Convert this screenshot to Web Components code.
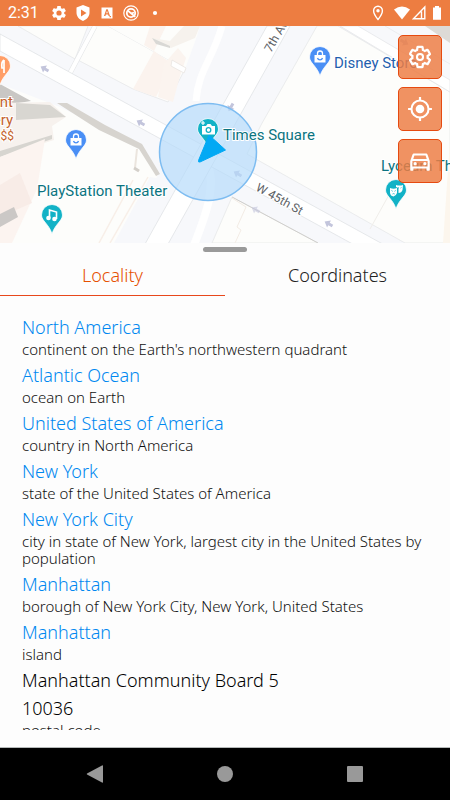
<!DOCTYPE html>
<html lang="en">
<head>
<meta charset="utf-8">
<meta name="viewport" content="width=device-width, initial-scale=1">
<title>Locality</title>
<style>
  body {
    margin: 0;
    font-family: "Noto Sans", "Open Sans", sans-serif;
    font-weight: 300;
    background: #fdfdfd;
  }
</style>
</head>
<body>
<phone-screen>
  <status-bar slot="status">2:31</status-bar>
  <map-view slot="map">
    <map-button icon="settings" label="Settings"></map-button>
    <map-button icon="target" label="My location"></map-button>
    <map-button icon="car" label="Driving mode"></map-button>
  </map-view>
  <bottom-sheet slot="sheet">
    <sheet-tab slot="tabs" selected>Locality</sheet-tab>
    <sheet-tab slot="tabs">Coordinates</sheet-tab>
    <place-item href="#north-america">North America<span slot="about">continent on the Earth's northwestern quadrant</span></place-item>
    <place-item href="#atlantic-ocean">Atlantic Ocean<span slot="about">ocean on Earth</span></place-item>
    <place-item href="#united-states">United States of America<span slot="about">country in North America</span></place-item>
    <place-item href="#new-york">New York<span slot="about">state of the United States of America</span></place-item>
    <place-item href="#new-york-city">New York City<span slot="about">city in state of New York, largest city in the United States by population</span></place-item>
    <place-item href="#manhattan">Manhattan<span slot="about">borough of New York City, New York, United States</span></place-item>
    <place-item href="#manhattan-island">Manhattan<span slot="about">island</span></place-item>
    <place-item>Manhattan Community Board 5</place-item>
    <place-item>10036<span slot="about">postal code</span></place-item>
  </bottom-sheet>
  <nav-bar slot="nav"></nav-bar>
</phone-screen>

<script>
const GEAR = 'M19.14 12.94c.04-.3.06-.61.06-.94 0-.32-.02-.64-.07-.94l2.03-1.58c.18-.14.23-.41.12-.61l-1.92-3.32c-.12-.22-.37-.29-.59-.22l-2.39.96c-.5-.38-1.03-.7-1.62-.94l-.36-2.54c-.04-.24-.24-.41-.48-.41h-3.84c-.24 0-.43.17-.47.41l-.36 2.54c-.59.24-1.13.57-1.62.94l-2.39-.96c-.22-.08-.47 0-.59.22L2.74 8.87c-.12.21-.08.47.12.61l2.03 1.58c-.05.3-.09.63-.09.94s.02.64.07.94l-2.03 1.58c-.18.14-.23.41-.12.61l1.92 3.32c.12.22.37.29.59.22l2.39-.96c.5.38 1.03.7 1.62.94l.36 2.54c.05.24.24.41.48.41h3.84c.24 0 .44-.17.47-.41l.36-2.54c.59-.24 1.13-.56 1.62-.94l2.39.96c.22.08.47 0 .59-.22l1.92-3.32c.12-.22.07-.47-.12-.61l-2.01-1.58z';

function makeTemplate(html) {
  const template = document.createElement('template');
  template.innerHTML = html;
  return template;
}

class BaseElement extends HTMLElement {
  constructor() {
    super();
    this.attachShadow({ mode: 'open' });
    this.shadowRoot.appendChild(this.constructor.template.content.cloneNode(true));
  }
}

class PhoneScreen extends BaseElement {
  static template = makeTemplate(`
    <style>
      :host {
        display: flex;
        flex-direction: column;
        height: 100vh;
        overflow: hidden;
      }
      ::slotted([slot="sheet"]) {
        flex: 1;
        min-height: 0;
      }
    </style>
    <slot name="status"></slot>
    <slot name="map"></slot>
    <slot name="sheet"></slot>
    <slot name="nav"></slot>
  `);
}

class StatusBar extends BaseElement {
  static template = makeTemplate(`
    <style>
      :host {
        display: flex;
        align-items: center;
        justify-content: space-between;
        height: 26px;
        padding: 0 8px;
        box-sizing: border-box;
        background: #ed7d41;
        color: #fff;
        font: 16px/26px Roboto, sans-serif;
      }
      .group {
        display: flex;
        align-items: center;
        gap: 8px;
      }
      .right {
        gap: 6px;
      }
      .radio {
        display: flex;
        gap: 2px;
      }
      .time {
        margin-right: 4px;
      }
      svg {
        display: block;
        fill: #fff;
      }
    </style>
    <div class="group">
      <span class="time"><slot></slot></span>
      <svg width="16" height="16" viewBox="1 1 22 22"><path fill-rule="evenodd" d="${GEAR}M12 15.6a3.6 3.6 0 1 1 0-7.2 3.6 3.6 0 0 1 0 7.2z"/></svg>
      <svg width="16" height="16" viewBox="0 0 16 16"><path fill-rule="evenodd" d="M8 0l6.500 2.500v5c0 4-2.700 7-6.500 8.500C4.200 14.500 1.500 11.500 1.500 7.500v-5zM6 4.500v7l5.500-3.500z"/></svg>
      <svg width="16" height="16" viewBox="0 0 16 16"><path fill-rule="evenodd" d="M2.500 2.500h11v11h-11zM7.300 4.300L5 11h1.400l.5-1.600h2.200l.5 1.600H11L8.700 4.300zm.7 1.500l.8 2.500H7.200zM10.500 11h1.500v1.200h-1.500z"/></svg>
      <svg width="16" height="16" viewBox="0 0 16 16"><g fill="none" stroke="#fff"><circle cx="8" cy="8" r="7.200" stroke-width="1.200"/><circle cx="8" cy="8" r="4.200" stroke-width="1.800"/><path d="M4.700 5.500l7.600 6.300M8 8.500l3-1" stroke-width="1.700"/></g></svg>
      <svg width="16" height="16" viewBox="0 0 16 16"><circle cx="8" cy="8" r="2.100"/></svg>
    </div>
    <div class="group right">
      <svg width="20" height="16" viewBox="-4 0 20 16"><path d="M6 1.200a4.400 4.400 0 0 0-4.400 4.500C1.600 9 6 14.500 6 14.500s4.400-5.500 4.400-8.800A4.400 4.400 0 0 0 6 1.200z" fill="none" stroke="#fff" stroke-width="1.400"/><circle cx="6" cy="5.800" r="1.700"/></svg>
      <div class="radio">
        <svg width="16" height="16" viewBox="0 0 16 16"><path d="M0 4.500Q8-1.500 16 4.500L8 14.500z"/></svg>
        <svg width="14" height="16" viewBox="0 0 14 16"><path d="M12.800 2v11.800H1.500zM9.500 6.500v7" fill="none" stroke="#fff" stroke-width="1.400"/></svg>
      </div>
      <svg width="10" height="16" viewBox="0 0 10 16"><path d="M1 2.500h2V1h4v1.500h2v12.300H1z"/></svg>
    </div>
  `);
}

class MapButton extends BaseElement {
  static icons = {
    settings: `<path transform="translate(12 12) scale(.98) translate(-12 -12)" d="${GEAR}" fill="none" stroke="#fff" stroke-width="2.100"/><circle cx="12" cy="12" r="2.800" fill="none" stroke="#fff" stroke-width="1.900"/>`,
    target: '<circle cx="12" cy="12" r="7.900" fill="none" stroke="#fff" stroke-width="1.900"/><circle cx="12" cy="12" r="4" /><path d="M12 1v3M12 20v3M1 12h3M20 12h3" stroke="#fff" stroke-width="2"/>',
    car: '<path fill-rule="evenodd" d="M18.920 6.010C18.720 5.420 18.160 5 17.500 5h-11c-.66 0-1.210.42-1.420 1.010L3 12v8c0 .55.45 1 1 1h1c.55 0 1-.45 1-1v-1h12v1c0 .55.45 1 1 1h1c.55 0 1-.45 1-1v-8zM6.850 7h10.290l1.080 3.110H5.770zM19 17H5v-5h14z"/><circle cx="7.500" cy="14.500" r="1.500"/><circle cx="16.500" cy="14.500" r="1.500"/>'
  };

  static template = makeTemplate(`
    <style>
      :host {
        display: block;
      }
      button {
        display: grid;
        place-items: center;
        width: 44px;
        height: 44px;
        padding: 0;
        border: 1px solid #e64a10;
        border-radius: 5px;
        background: rgba(237, 125, 68, 0.84);
        cursor: pointer;
      }
      svg {
        fill: #fff;
      }
    </style>
    <button type="button"><svg width="26" height="26" viewBox="0 0 24 24"></svg></button>
  `);

  connectedCallback() {
    this.shadowRoot.querySelector('svg').innerHTML = MapButton.icons[this.getAttribute('icon')];
    this.shadowRoot.querySelector('button').setAttribute('aria-label', this.getAttribute('label'));
  }
}

class MapView extends BaseElement {
  static template = makeTemplate(`
    <style>
      :host {
        display: block;
        position: relative;
        flex: none;
        height: 217px;
        overflow: hidden;
      }
      svg {
        display: block;
        width: 100%;
        height: 100%;
      }
      text {
        font-family: Roboto, sans-serif;
        font-size: 15px;
        font-weight: 400;
        paint-order: stroke;
        stroke: #fff;
        stroke-width: 2px;
      }
      .street {
        font-size: 12px;
        fill: #5c6166;
      }
      .teal {
        fill: #0b7480;
      }
      .food {
        fill: #c4622d;
        text-anchor: end;
      }
      .price {
        font-size: 12px;
      }
      .shop {
        fill: #1f5fae;
      }
      .controls {
        position: absolute;
        top: 9px;
        right: 8px;
        display: flex;
        flex-direction: column;
        gap: 8px;
      }
    </style>
    <svg viewBox="0 26 450 217" preserveAspectRatio="xMidYMid slice">
      <defs>
        <path id="pin" d="M0-10.500A10.500 10.500 0 0 0-10.500 0C-10.500 6-3 9 0 19 3 9 10.500 6 10.500 0A10.500 10.500 0 0 0 0-10.500z" stroke="#fff" stroke-width=".8"/>
        <path id="way" d="M-5 0L0-4v2.500h4v3H0V4z" fill="#c3c5dc"/>
        <g id="bag" fill="#fff">
          <path d="M-5.500-2h11v7.500h-11z"/>
          <path d="M-2.500-1.500v-2a2.500 2.500 0 0 1 5 0v2" fill="none" stroke="#fff" stroke-width="1.300"/>
          <path d="M-2.500 1a2.600 2.600 0 0 0 5 0" fill="none" stroke="#4a8ff5" stroke-width="1.300"/>
        </g>
      </defs>
      <rect y="26" width="450" height="217" fill="#f7f8fb"/>

      <!-- blocks -->
      <g fill="#fdfdfb" stroke="#e4e5e6" stroke-width=".7">
        <path d="M18 26h70L75 59z"/>
        <path d="M93 26h15l77 43-17 33-35-13-57-30z"/>
        <path d="M108 26h92l-3 10-12 33z" stroke="none"/>
        <path d="M317 26h21l112 66v151h-45L247 154l14-29z"/>
        <path d="M232 197l86 46H212z"/>
        <path d="M0 84l60 23 79 40 19 28-38 68H0z" stroke="none"/>
      </g>
      <path d="M358 26h67l25 17v48z" fill="#f7f8fb"/>

      <!-- buildings -->
      <path d="M154 51l18 13-16 33-23-8zM150 26h16l-12 25-10-6z" fill="#fbf3ee"/>
      <path d="M164 64l14-16 8 10-6 18-7 26-15-5z" fill="#fbf4ef"/>
      <path d="M152 38l18 3 14-15h16l-5 12-24 10z" fill="#f6f2ed"/>
      <path d="M152 38l18 8v2l-14-4z" fill="#d9d8d5"/>
      <path d="M172 60l14 8-2 5-13-7z" fill="#fff" stroke="#e6e3de" stroke-width=".7"/>
      <path d="M0 84l31 17-31 5z" fill="#c9c7c4"/>
      <path d="M0 103l50-1 16 15-14 9 2 14-54 17z" fill="#f7f2ee"/>
      <path d="M16 103l34 2 16 12-50 3z" fill="#d8d6d1"/>
      <path d="M0 151l52-16v4L0 157z" fill="#d7d5d0"/>
      <path d="M0 157l45-18-8 50-25 54H0z" fill="#fcf4f0"/>
      <path d="M0 185l20-12 12 30-32 14z" fill="#f8ece7"/>
      <path d="M0 214l14-7 4 10-18 10z" fill="#cbc8c6"/>
      <path d="M57 103h10l38 22 37 19 18 30-4 2-17-27-40-19z" fill="#d7d4cf"/>
      <path d="M137 149l-2 19 4 3" fill="none" stroke="#ebe5de" stroke-width="2"/>
      <path d="M134 168l5 3" stroke="#d4d0ca" stroke-width="3"/>
      <path d="M133 180l-34 63M148 177l-38 66" stroke="#f8efe8" stroke-width="1.500"/>
      <path d="M150 177l-36 66h28l32-62z" fill="#f7f8fb"/>
      <path d="M425 26h25v17z" fill="#dddad6"/>
      <path d="M232 197l86 46" stroke="#cfcecb"/>
      <path d="M232 198l14 9-9 20 4 3-6 13" stroke="#f3ece5" fill="none"/>
      <path d="M450 140v103h-7z" fill="#fcf6ed"/>
      <path d="M390 193l-20 36" stroke="#f0eeea"/>

      <!-- roads -->
      <path d="M95 26L69 75" stroke="#e1e3e5" stroke-width="5"/>
      <path d="M95 26L69 75" stroke="#fff" stroke-width="4"/>
      <path d="M222 26c-10 35-24 45-26 75" fill="none" stroke="#fff" stroke-width="7"/>
      <path d="M208 165c8 22-2 50-14 80" fill="none" stroke="#fff" stroke-width="8"/>
      <path d="M0 34l410 225h-30L0 51z" fill="#fff" stroke="#dde0e3" stroke-width=".7"/>
      <path d="M267 26h23L168 244h-23z" fill="#fff" stroke="#dde0e3" stroke-width=".7"/>
      <path d="M358 26l92 54v12L340 26z" fill="#fff" stroke="#e2e4e6" stroke-width=".7"/>
      <path d="M385 26l65 38" fill="none" stroke="#e5e7ea" stroke-width=".7"/>
      <use href="#way" transform="translate(45 69) rotate(29)"/>
      <use href="#way" transform="translate(141 123) rotate(29)"/>
      <use href="#way" transform="translate(238 174) rotate(29)"/>
      <use href="#way" transform="translate(329 224) rotate(29)"/>
      <use href="#way" transform="translate(231 107) rotate(-60)"/>
      <use href="#way" transform="translate(404 42) rotate(209)"/>
      <use href="#way" transform="translate(256 210) rotate(29)" opacity=".6"/>

      <text class="street" transform="translate(271 53) rotate(-60)">7th Av</text>
      <text class="street" transform="translate(255 190) rotate(29)">W 45th St</text>

      <!-- current position -->
      <circle cx="208" cy="152" r="48.500" fill="#b4dafa" fill-opacity=".68" stroke="#7dbcf1" stroke-width="1.500"/>

      <!-- places -->
      <use href="#pin" x="320" y="57" fill="#4a8ff5"/>
      <use href="#bag" x="320" y="57"/>
      <use href="#pin" x="76" y="140" fill="#4a8ff5"/>
      <use href="#bag" x="76" y="140"/>
      <use href="#pin" x="0" y="66" fill="#ff9e67"/>
      <path d="M4 60v13M4 60q-3 2-2 8h2" fill="none" stroke="#fff" stroke-width="1.700"/>
      <use href="#pin" x="52" y="215" fill="#12b2c6"/>
      <g fill="#fff"><circle cx="48.500" cy="218" r="2.300"/><circle cx="54.500" cy="219" r="2.300"/><path d="M49.500 218v-8l7 2v7" fill="none" stroke="#fff" stroke-width="1.600"/></g>
      <use href="#pin" x="208" y="129" fill="#12b2c6"/>
      <path d="M202 126h4l1.500-2h3l1.500 2h3v8.500h-13z" fill="#fff"/>
      <circle cx="208.500" cy="130" r="2.300" fill="#fff" stroke="#12b2c6" stroke-width="1.300"/>
      <path d="M203 121v4M201 123h4" stroke="#fff" stroke-width="1.200"/>
      <use href="#pin" x="396" y="190" fill="#12b2c6"/>
      <path d="M390 188q3.500 1.500 7 0v5q-1 3-3.500 3.500-3-.5-3.500-3.500zM396 185q3.500 1 7 0l-.5 5q-1 3-4 3v-5l-2.500-1z" fill="#fff"/>
      <path d="M391.500 190.500l1.200.8M395.700 190.500l-1.200.8M392.500 194q1-.8 2.200 0M398 187.500l1 .6M401.500 187.500l-1 .6" stroke="#12b2c6" stroke-width=".8" fill="none"/>

      <path d="M209 135l16.500 15-25.500 12q-2 .5-1.500-1.500z" fill="#03a9f4" stroke="#03a9f4" stroke-width="1" stroke-linejoin="round"/>

      <text class="food" x="13" y="107">nt</text>
      <text class="food" x="13" y="125">ery</text>
      <text class="food price" x="14" y="140">$$</text>
      <text class="shop" x="334" y="68">Disney Store</text>
      <text class="teal" x="223" y="140">Times Square</text>
      <text class="teal" x="37" y="196">PlayStation Theater</text>
      <text class="teal" x="381" y="171">Lyceum Th</text>
    </svg>
    <div class="controls"><slot></slot></div>
  `);
}

class BottomSheet extends BaseElement {
  static template = makeTemplate(`
    <style>
      :host {
        display: flex;
        flex-direction: column;
        box-sizing: border-box;
        padding: 4px 0 17px;
        background: #fdfdfd;
        border-bottom: 1px solid #b5b9b9;
      }
      .handle {
        flex: none;
        align-self: center;
        width: 44px;
        height: 5px;
        border-radius: 3px;
        background: #9a9a9a;
      }
      .tabs {
        display: grid;
        grid-template-columns: 1fr 1fr;
        flex: none;
      }
      .list {
        flex: 1;
        min-height: 0;
        overflow: hidden;
        padding: 17px 22px 0;
      }
    </style>
    <div class="handle"></div>
    <div class="tabs" role="tablist"><slot name="tabs"></slot></div>
    <div class="list"><slot></slot></div>
  `);
}

class SheetTab extends BaseElement {
  static template = makeTemplate(`
    <style>
      :host {
        display: block;
        color: #222;
      }
      :host([selected]) {
        color: #e65000;
      }
      button {
        display: block;
        width: 100%;
        height: 44px;
        padding: 3px 0 0;
        border: 0;
        border-bottom: 1px solid transparent;
        background: none;
        color: inherit;
        font: inherit;
        font-size: 18px;
        line-height: 40px;
        cursor: pointer;
      }
      :host([selected]) button {
        border-bottom-color: #e8481c;
      }
    </style>
    <button type="button" role="tab"><slot></slot></button>
  `);

  connectedCallback() {
    this.shadowRoot.querySelector('button').setAttribute('aria-selected', this.hasAttribute('selected'));
  }
}

class PlaceItem extends BaseElement {
  static template = makeTemplate(`
    <style>
      :host {
        display: block;
      }
      .title {
        display: block;
        font-size: 18px;
        line-height: 28px;
        color: #000;
        text-decoration: none;
      }
      .title[href] {
        color: #0088f0;
      }
      ::slotted([slot="about"]) {
        display: block;
        padding-bottom: 3px;
        font-size: 15px;
        line-height: 17px;
        color: #111;
      }
    </style>
    <a class="title"><slot></slot></a>
    <slot name="about"></slot>
  `);

  connectedCallback() {
    if (this.hasAttribute('href')) {
      this.shadowRoot.querySelector('.title').setAttribute('href', this.getAttribute('href'));
    }
  }
}

class NavBar extends BaseElement {
  static template = makeTemplate(`
    <style>
      :host {
        display: grid;
        grid-template-columns: repeat(3, 1fr);
        flex: none;
        height: 52px;
        padding: 0 30px;
        background: #000;
      }
      button {
        display: grid;
        place-items: center;
        padding: 0;
        border: 0;
        background: none;
      }
      svg {
        fill: #999;
      }
    </style>
    <button type="button" aria-label="Back"><svg width="18" height="18" viewBox="0 0 18 18"><path d="M17 1v16q0 1-1 .5L1 9.500Q.5 9 1 8.500L16 .5q1-.5 1 .5z"/></svg></button>
    <button type="button" aria-label="Home"><svg width="18" height="18" viewBox="0 0 18 18"><circle cx="9" cy="9" r="8"/></svg></button>
    <button type="button" aria-label="Recents"><svg width="18" height="18" viewBox="0 0 18 18"><rect x="1" y="1" width="16" height="16" rx="1"/></svg></button>
  `);
}

customElements.define('phone-screen', PhoneScreen);
customElements.define('status-bar', StatusBar);
customElements.define('map-button', MapButton);
customElements.define('map-view', MapView);
customElements.define('bottom-sheet', BottomSheet);
customElements.define('sheet-tab', SheetTab);
customElements.define('place-item', PlaceItem);
customElements.define('nav-bar', NavBar);
</script>
</body>
</html>
